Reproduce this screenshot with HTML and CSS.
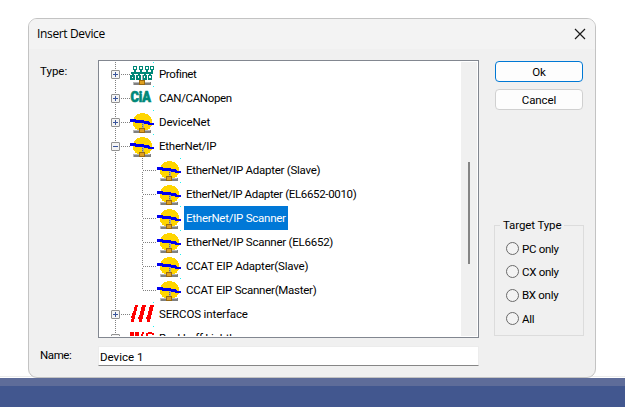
FILE: index.html
```html
<!DOCTYPE html>
<html lang="en">
<head>
<meta charset="utf-8">
<title>Insert Device</title>
<link rel="stylesheet" href="styles.css">
</head>
<body>
<svg class="defs" width="0" height="0" aria-hidden="true">
  <symbol id="base" viewBox="0 0 24 24">
    <path fill="#808080" d="M3 20h18v3H3z"/>
    <path fill="#b8b8b8" d="M3 20h7v1H4v2H3zM15 20h5v1h-5z"/>
    <path fill="#9a6a10" d="M9 18h6v5H9z"/>
    <path fill="#dfa020" d="M10 19h4v3h-4z"/>
    <path fill="#20f0f0" d="M23 0h1v1h-1z"/>
  </symbol>
  <symbol id="net" viewBox="0 0 24 24">
    <path fill="#ffd500" d="M10 3h5v1h3v1h1v1h1v1h1v2h1v7h-1v1h-1v2h-2v1H7v-1H5v-2H4v-1H3V9h1V7h1V6h1V5h1V4h3z"/>
    <path fill="#a8a8a0" d="M12 13h2v5h-2z"/>
    <path fill="#707070" d="M12 14h1v1h-1zM12 16h1v1h-1z"/>
    <path fill="#0000f0" d="M0 9h6v1h8v1h5v1h1v1h4v2h-6v-1h-4v-1H5v-1H0z"/>
    <use href="#base"/>
  </symbol>
  <symbol id="profinet" viewBox="0 0 24 24">
    <path fill="#008878" d="M1 10h22v2H1zM4 8h2v2H4zM10 8h2v2h-2zM16 8h2v2h-2zM21 8h2v2h-2zM2 12h2v1H2zM8 12h2v1H8zM14 12h2v1h-2zM19 12h2v1h-2z"/>
    <path fill="#008878" fill-rule="evenodd" d="M3 4h4v4H3zM4 5v2h2V5zM9 4h4v4H9zM10 5v2h2V5zM15 4h4v4h-4zM16 5v2h2V5zM20 4h4v4h-4zM21 5v2h2V5zM0 13h5v5H0zM2 15v1h1v-1zM6 13h5v5H6zM8 14v2h1v-2zM12 13h5v5h-5zM14 14v2h1v-2zM18 13h4v5h-4zM19 14v2h2v-2z"/>
    <path fill="#a8a8a8" d="M12 13h1v5h-1z"/>
    <use href="#base"/>
  </symbol>
</svg>

<main class="dialog">
  <header class="titlebar">
    <h1 class="title">Insert Device</h1>
    <svg class="close" viewBox="0 0 12 12"><path d="M1 1l10 10M11 1L1 11"/></svg>
  </header>
  <div class="content">
    <span class="label">Type:</span>
    <div class="tree">
      <ul class="nodes">
        <li class="row"><i class="box plus"></i><i class="dots"></i><svg class="icon"><use href="#profinet"/></svg><span class="name n1">Profinet</span></li>
        <li class="row"><i class="box plus"></i><i class="dots"></i><svg class="icon"><text class="cia" x="0.5" y="16" textLength="20.500" lengthAdjust="spacingAndGlyphs">CiA</text><path class="dot" d="M23 0h1v1h-1z"/></svg><span class="name n2">CAN/CANopen</span></li>
        <li class="row"><i class="box plus"></i><i class="dots"></i><svg class="icon"><use href="#net"/></svg><span class="name n3">DeviceNet</span></li>
        <li class="row"><i class="box"></i><i class="dots"></i><svg class="icon"><use href="#net"/></svg><span class="name n4">EtherNet/IP</span></li>
        <li>
          <ul class="children">
            <li class="row"><i class="dots"></i><svg class="icon"><use href="#net"/></svg><span class="name c1">EtherNet/IP Adapter (Slave)</span></li>
            <li class="row"><i class="dots"></i><svg class="icon"><use href="#net"/></svg><span class="name c2">EtherNet/IP Adapter (EL6652-0010)</span></li>
            <li class="row"><i class="dots"></i><svg class="icon"><use href="#net"/></svg><span class="name c3 selected">EtherNet/IP Scanner</span></li>
            <li class="row"><i class="dots"></i><svg class="icon"><use href="#net"/></svg><span class="name c4">EtherNet/IP Scanner (EL6652)</span></li>
            <li class="row"><i class="dots"></i><svg class="icon"><use href="#net"/></svg><span class="name c5">CCAT EIP Adapter(Slave)</span></li>
            <li class="row"><i class="dots"></i><svg class="icon"><use href="#net"/></svg><span class="name c6">CCAT EIP Scanner(Master)</span></li>
          </ul>
        </li>
        <li class="row"><i class="box plus"></i><i class="dots"></i><svg class="icon"><path fill="#f00" d="M5 3h3v2H7v4H6v4H5v4H4v3H1v-3h1v-1H1v-2h1v-3h1V9h1V5h1zM12 3h4v2h-1v4h-1v4h-1v4h-1v3H9v-3H8v-2h1v-2h1V9h1V5h1zM20 3h4v2h-1v4h-1v4h-1v4h-1v3h-3v-3h-1v-2h1v-2h1V9h1V5h1z"/><path class="dot" d="M23 0h1v1h-1z"/></svg><span class="name n5">SERCOS interface</span></li>
        <li class="row"><i class="box plus"></i><i class="dots"></i><svg class="icon"><path fill="#f00" d="M0 6h4v12H0zM5 6h4v12H5zM12 6h2v2h-1v3h-1v4h-1v3H9v-3h1v-4h1V8h1zM16 7h2V6h4v1h2v2h-2V8h-4v3h-2z"/><path class="dot" d="M23 0h1v1h-1z"/></svg><span class="name n6">Beckhoff Lightbus</span></li>
      </ul>
      <div class="scrollbar"><div class="thumb"></div></div>
    </div>
    <aside class="side">
      <button class="btn primary">Ok</button>
      <button class="btn">Cancel</button>
      <fieldset class="group">
        <legend>Target Type</legend>
        <label class="option"><i class="radio"></i><span>PC only</span></label>
        <label class="option"><i class="radio"></i><span>CX only</span></label>
        <label class="option"><i class="radio"></i><span>BX only</span></label>
        <label class="option"><i class="radio"></i><span>All</span></label>
      </fieldset>
    </aside>
    <span class="label name-label">Name:</span>
    <div class="field">Device 1</div>
  </div>
</main>
<footer class="taskbar"></footer>
</body>
</html>
```
FILE: styles.css
```css
* { box-sizing: border-box; }

body {
  margin: 0;
  height: 407px;
  padding-top: 18px;
  background: linear-gradient(#ececec, #ececec) 0 376px / 100% 1px no-repeat, #fff;
  color: #000;
  font: 11.5px/16px Roboto, "Liberation Sans", sans-serif;
  overflow: hidden;
}

ul { list-style: none; margin: 0; padding: 0; }
.defs { display: block; height: 0; }

.dialog {
  width: 568px;
  height: 360px;
  margin-left: 28px;
  border: 1px solid #c3c3c3;
  border-radius: 9px;
  background: #f0f0f0;
  overflow: hidden;
}

.titlebar {
  height: 30px;
  padding: 0 9px 0 8px;
  display: flex;
  align-items: center;
  justify-content: space-between;
  background: #f3f3f3;
}
.title { margin: 0; font: 400 12px/16px "Open Sans", sans-serif; letter-spacing: -0.35px; }
.close { width: 12px; height: 12px; stroke: #1a1a1a; stroke-width: 1.2; fill: none; }

.content {
  display: grid;
  grid-template-columns: 58px 381px 88px;
  grid-template-rows: 278px 20px;
  row-gap: 8px;
  padding: 11px 0 0 11px;
}
.label { padding-top: 3px; }
.name-label { padding-top: 1px; letter-spacing: -0.4px; }

.tree {
  display: flex;
  border: 1px solid #828790;
  padding: 1px;
  background: #fff;
  overflow: hidden;
}
.nodes {
  flex: 1;
  height: 274px;
  overflow: hidden;
  padding-left: 11px;
  background: repeating-linear-gradient(#808080 0 1px, #fff 1px 2px) 15px 0 / 1px 100% no-repeat;
}
.row { display: flex; align-items: center; height: 24px; }
.box {
  width: 9px;
  height: 9px;
  border: 1px solid #919191;
  border-radius: 1px;
  background: linear-gradient(#3a559c, #3a559c) center / 5px 1px no-repeat, #f4f4f4;
}
.plus {
  background: linear-gradient(#3a559c, #3a559c) center / 5px 1px no-repeat,
    linear-gradient(#3a559c, #3a559c) center / 1px 5px no-repeat, #f4f4f4;
}
.dots { width: 10px; height: 1px; background: repeating-linear-gradient(90deg, #fff 0 1px, #808080 1px 2px); }
.icon { width: 24px; height: 24px; flex: none; shape-rendering: crispEdges; overflow: visible; }
.dot { fill: #20f0f0; }
.cia { font: 900 15px Roboto, sans-serif; fill: #008878; stroke: #008878; stroke-width: .7px; }
.name { height: 24px; padding: 4px 2px; margin-left: 3px; white-space: nowrap; }
.children {
  padding-left: 31px;
  background: repeating-linear-gradient(#808080 0 1px, #fff 1px 2px) 31px 0 / 1px 132px no-repeat;
}
.children .dots { width: 15px; }
.selected { background: #0078d7; color: #fff; }

.n1 { letter-spacing: -0.4px; }
.n2 { letter-spacing: -0.35px; }
.n3 { letter-spacing: -0.1px; }
.n4 { letter-spacing: -0.24px; }
.n5 { letter-spacing: -0.13px; }
.n6 { letter-spacing: -0.3px; }
.c1 { letter-spacing: -0.26px; }
.c2 { letter-spacing: -0.34px; }
.c3 { letter-spacing: -0.25px; }
.c4 { letter-spacing: -0.24px; }
.c5 { letter-spacing: -0.2px; }
.c6 { letter-spacing: -0.26px; }

.scrollbar { width: 16px; padding: 100px 0 0 7px; background: #f0f0f0; }
.thumb { width: 2px; height: 102px; background: #858585; }

.side { display: flex; flex-direction: column; padding-left: 16px; width: 104px; }
.btn {
  width: 88px;
  height: 21px;
  margin: 1px 0 6px;
  padding: 0;
  border: 1px solid #d0d0d0;
  border-radius: 4px;
  background: #fdfdfd;
  font: inherit;
  line-height: 20px;
  letter-spacing: -0.1px;
}
.primary { border-color: #0078d4; }
.group {
  width: 90px;
  height: 119px;
  margin: 101px 0 0 -1px;
  padding: 4px 0 0 11px;
  border: 1px solid #dcdcdc;
}
.group legend { margin-left: -6px; padding: 0 3px; line-height: 16px; letter-spacing: -0.12px; }
.option { display: flex; align-items: center; gap: 3px; height: 23.300px; letter-spacing: -0.3px; }
.radio { width: 13px; height: 13px; border: 1px solid #6a6a6a; border-radius: 50%; background: #f3f3f3; }

.field {
  height: 20px;
  padding: 2px 1px;
  background: #fff;
  border: 1px solid #ececec;
  border-bottom-color: #868686;
}

.taskbar { height: 29px; background: #42578f; border-top: 8px solid #5e6c99; }
```
